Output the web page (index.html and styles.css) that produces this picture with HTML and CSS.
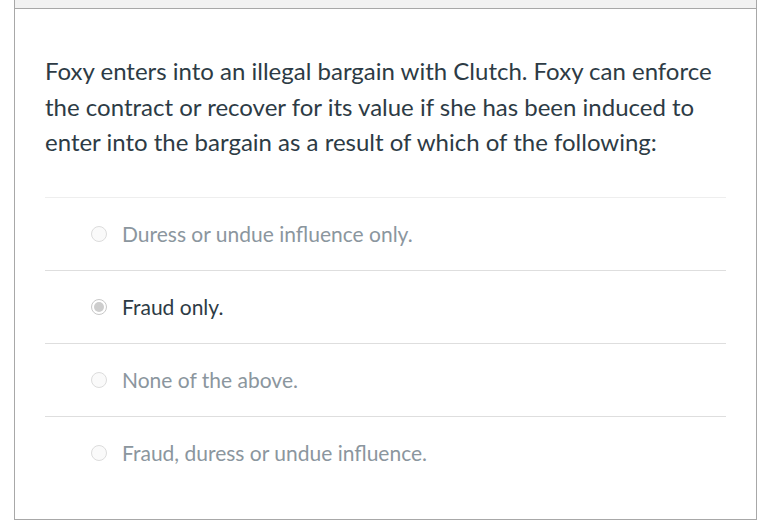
FILE: index.html
```html
<!DOCTYPE html>
<html>
<head>
<meta charset="utf-8">
<link rel="stylesheet" href="styles.css">
</head>
<body>
<div class="card">
  <div class="card-top"></div>
  <div class="card-body">
    <p class="question">Foxy enters into an illegal bargain with Clutch. Foxy can enforce the contract or recover for its value if she has been induced to enter into the bargain as a result of which of the following:</p>
    <div class="answers">
      <div class="answer first">
        <span class="radio"></span>
        <span class="label">Duress or undue influence only.</span>
      </div>
      <div class="answer selected">
        <span class="radio"></span>
        <span class="label">Fraud only.</span>
      </div>
      <div class="answer">
        <span class="radio"></span>
        <span class="label">None of the above.</span>
      </div>
      <div class="answer">
        <span class="radio"></span>
        <span class="label">Fraud, duress or undue influence.</span>
      </div>
    </div>
  </div>
</div>
</body>
</html>
```

FILE: styles.css
```css
html, body {
  margin: 0;
  padding: 0;
  background: #ffffff;
}
body {
  font-family: Lato, "Noto Sans", sans-serif;
  color: #2d3b45;
}
.card {
  margin-left: 14px;
  width: 743px;
  height: 520px;
  border-left: 1px solid #a8a8a8;
  border-right: 1px solid #a8a8a8;
  border-bottom: 1px solid #a8a8a8;
  box-sizing: border-box;
}
.card-top {
  height: 8px;
  background: #f2f2f2;
  border-bottom: 1px solid #a8a8a8;
}
.card-body {
  padding: 44px 30px 0 30px;
}
.question {
  margin: 0;
  font-size: 24px;
  line-height: 35.5px;
}
.answers {
  margin-top: 37px;
}
.answer {
  display: flex;
  align-items: center;
  height: 72px;
  border-top: 1px solid #dedede;
  padding-left: 46px;
}
.answer.first {
  border-top-color: #eeeeee;
}
.radio {
  width: 14px;
  height: 14px;
  border-radius: 50%;
  border: 1px solid #dcdcdc;
  background: #fafafa;
  margin-right: 15px;
  box-sizing: content-box;
  position: relative;
}
.answer.selected .radio {
  border-color: #c8c8c8;
  background: #ffffff;
}
.answer.selected .radio::after {
  content: "";
  position: absolute;
  left: 2px;
  top: 2px;
  width: 10px;
  height: 10px;
  border-radius: 50%;
  background: #cdcdcd;
}
.label {
  font-size: 21px;
  color: #8b969e;
}
.answer.selected .label {
  color: #2d3b45;
}
```
